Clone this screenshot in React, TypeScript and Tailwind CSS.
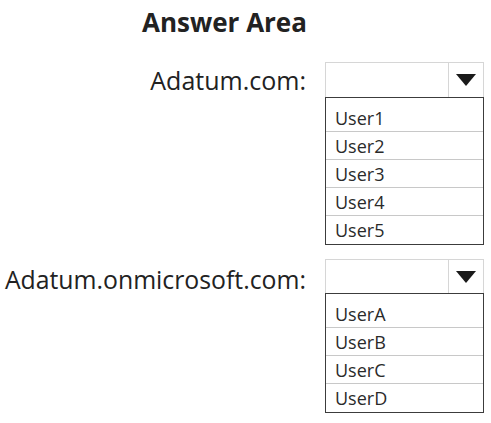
const font = { fontFamily: '"Open Sans", "Noto Sans", sans-serif' }

function Caret() {
  return (
    <svg width="20" height="12" viewBox="0 0 20 12" className="block">
      <path d="M0 0 H20 L10 12 Z" fill="#1a1a1a" />
    </svg>
  )
}

function Dropdown({ options, height }: { options: string[]; height: string }) {
  return (
    <div className="w-[159px]">
      <div className={`flex ${height} border border-b-0 border-[#d6d6d6] bg-white`}>
        <div className="flex-1" />
        <div className="flex w-[35px] items-center justify-center border-l border-[#d6d6d6]">
          <Caret />
        </div>
      </div>
      <div className="border border-[#3c3c3c] bg-white pt-[6px]">
        {options.map((o, i) => (
          <div
            key={o}
            className={`h-[28px] pl-[9px] text-[18px] leading-[28px] text-[#2a2a2a] ${
              i < options.length - 1 ? "border-b border-[#c8c8c8]" : ""
            }`}
          >
            {o}
          </div>
        ))}
      </div>
    </div>
  )
}

export default function App() {
  return (
    <div className="h-[423px] w-[491px] bg-white text-[#222]" style={font}>
      <div className="pt-[4px] pl-[142px] text-[26px] font-bold leading-[36px]">Answer Area</div>

      <div className="mt-[22px] flex gap-[19px]">
        <div className="w-[306px] pt-[3px] text-right text-[25px] leading-[30px]">Adatum.com:</div>
        <Dropdown options={["User1", "User2", "User3", "User4", "User5"]} height="h-[35px]" />
      </div>

      <div className="mt-[14px] flex gap-[19px]">
        <div className="w-[306px] pt-[5px] text-right text-[24.8px] leading-[30px]">
          Adatum.onmicrosoft.com:
        </div>
        <Dropdown options={["UserA", "UserB", "UserC", "UserD"]} height="h-[34px]" />
      </div>
    </div>
  )
}
